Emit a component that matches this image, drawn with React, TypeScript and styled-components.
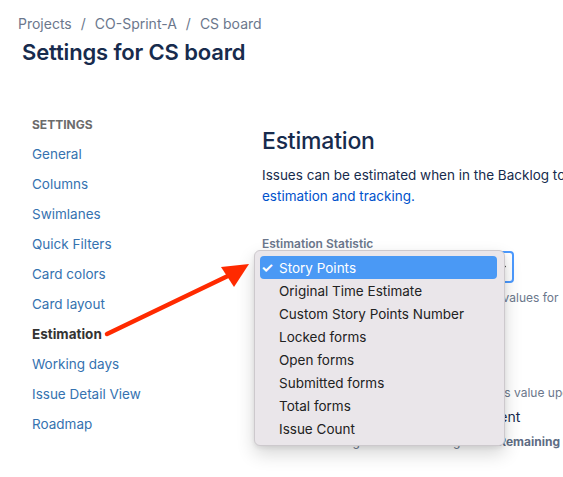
import React from 'react';
import styled, { createGlobalStyle } from 'styled-components';

const GlobalStyle = createGlobalStyle`
  html, body { margin: 0; padding: 0; background: #ffffff; overflow: hidden; }
  body { font-family: Inter, "Liberation Sans", Arial, sans-serif; -webkit-font-smoothing: antialiased; }
  * { box-sizing: border-box; }
`;

const Page = styled.div`
  position: relative;
  width: 563px;
  height: 477px;
  overflow: hidden;
`;

const Header = styled.header`
  padding-top: 14px;
`;

const Breadcrumbs = styled.nav`
  display: flex;
  align-items: center;
  margin-left: 18px;
  font-size: 14px;
  line-height: 20px;
  color: #6b778c;
`;

const Crumb = styled.span`
  white-space: nowrap;
`;

const Sep = styled.span`
  padding: 0 9px;
`;

const Title = styled.h1`
  margin: 4px 0 0 22px;
  font-size: 22px;
  line-height: 28px;
  font-weight: 600;
  color: #172b4d;
  letter-spacing: -0.15px;
`;

const Content = styled.div`
  display: flex;
  margin-top: 51px;
  width: 900px;
`;

const Sidebar = styled.aside`
  flex: none;
  width: 262px;
  padding-left: 32px;
`;

const SideHeading = styled.div`
  font-size: 12px;
  line-height: 16px;
  font-weight: 700;
  color: #6b6b6b;
  margin-bottom: 6px;
`;

const NavItem = styled.a<{ $active?: boolean }>`
  display: block;
  font-size: 13.5px;
  line-height: 30px;
  color: ${p => (p.$active ? '#333333' : '#3572b0')};
  font-weight: ${p => (p.$active ? 700 : 400)};
  text-decoration: none;
  white-space: nowrap;
`;

const Main = styled.main`
  flex: none;
  width: 620px;
  padding-top: 10px;
  color: #172b4d;
`;

const SectionTitle = styled.h2`
  margin: 0 0 10px;
  font-size: 23px;
  line-height: 28px;
  font-weight: 500;
  color: #172b4d;
  letter-spacing: -0.2px;
`;

const Para = styled.p`
  margin: 0;
  font-size: 13.5px;
  line-height: 21px;
  white-space: nowrap;
`;

const Link = styled.a`
  color: #0052cc;
  text-decoration: none;
`;

const Field = styled.div`
  margin-top: 30px;
`;

const Label = styled.label`
  display: block;
  font-size: 12px;
  line-height: 14px;
  font-weight: 600;
  color: #6b778c;
`;

const SelectBox = styled.div`
  width: 252px;
  height: 32px;
  border: 2px solid #4c9aff;
  border-radius: 4px;
  background: #ffffff;
  display: flex;
  align-items: center;
  justify-content: flex-end;
  padding-right: 4px;
`;

const Help = styled.div`
  margin-top: 7px;
  font-size: 12px;
  line-height: 16px;
  color: #6b778c;
  white-space: nowrap;
`;

const SubTitle = styled.h3`
  margin: 15px 0 12px;
  font-size: 16px;
  line-height: 20px;
  font-weight: 600;
  color: #172b4d;
`;

const Description = styled.div`
  font-size: 12px;
  line-height: 16px;
  color: #6b778c;
  white-space: nowrap;
`;

const RadioRow = styled.div`
  display: flex;
  align-items: center;
  gap: 7px;
  margin-top: 6px;
  font-size: 14px;
  line-height: 20px;
  color: #172b4d;
  white-space: nowrap;
`;

const Radio = styled.span`
  width: 14px;
  height: 14px;
  border-radius: 50%;
  border: 4px solid #0052cc;
`;

const RadioHelp = styled.div`
  margin: 7px 0 0 21px;
  font-size: 12px;
  line-height: 16px;
  color: #6b778c;
  white-space: nowrap;
  b { font-weight: 700; color: #5e6c84; }
`;

const Menu = styled.ul`
  position: absolute;
  left: 254px;
  top: 250px;
  width: 251px;
  margin: 0;
  padding: 5px 7px 5px 5px;
  list-style: none;
  background: #eae6ea;
  border: 1px solid #cdc9cd;
  border-radius: 6px;
  box-shadow: 0 8px 18px rgba(0, 0, 0, 0.16), 0 2px 4px rgba(0, 0, 0, 0.08);
`;

const MenuItem = styled.li<{ $selected?: boolean }>`
  display: flex;
  align-items: center;
  height: 23px;
  padding-left: 1px;
  border-radius: 4px;
  font-size: 13.5px;
  color: ${p => (p.$selected ? '#ffffff' : '#222222')};
  background: ${p => (p.$selected ? '#4a99f5' : 'transparent')};
  white-space: nowrap;
`;

const Check = styled.span`
  width: 18px;
  font-size: 14px;
  font-weight: 700;
`;

const Overlay = styled.svg`
  position: absolute;
  left: 0;
  top: 0;
  pointer-events: none;
`;

const navItems = [
  'General',
  'Columns',
  'Swimlanes',
  'Quick Filters',
  'Card colors',
  'Card layout',
  'Estimation',
  'Working days',
  'Issue Detail View',
  'Roadmap',
];

const options = [
  'Story Points',
  'Original Time Estimate',
  'Custom Story Points Number',
  'Locked forms',
  'Open forms',
  'Submitted forms',
  'Total forms',
  'Issue Count',
];

export default function App() {
  return (
    <Page>
      <GlobalStyle />
      <Header>
        <Breadcrumbs>
          <Crumb>Projects</Crumb>
          <Sep>/</Sep>
          <Crumb>CO-Sprint-A</Crumb>
          <Sep>/</Sep>
          <Crumb>CS board</Crumb>
        </Breadcrumbs>
        <Title>Settings for CS board</Title>
      </Header>
      <Content>
        <Sidebar>
          <SideHeading>SETTINGS</SideHeading>
          {navItems.map(n => (
            <NavItem key={n} $active={n === 'Estimation'}>
              {n}
            </NavItem>
          ))}
        </Sidebar>
        <Main>
          <SectionTitle>Estimation</SectionTitle>
          <Para>
            Issues can be estimated when in the Backlog to help with planning. Learn more about
            <br />
            <Link>estimation and tracking.</Link>
          </Para>
          <Field>
            <Label>Estimation Statistic</Label>
            <SelectBox>
              <svg width="10" height="10" viewBox="0 0 10 10">
                <path d="M2.5 4 L5 6.5 L7.5 4" fill="none" stroke="#222" strokeWidth="1.5" />
              </svg>
            </SelectBox>
            <Help>
              Used to estimate and track all issues. Add values for
              <br />
              each issue in reports.
            </Help>
          </Field>
          <SubTitle>Time Tracking</SubTitle>
          <Description>
            The Remaining Estimate is tracked.
            <br />
            When work is logged, Jira then updates this value upon logging work.
          </Description>
          <RadioRow>
            <Radio />
            Remaining Estimate and Time Spent
          </RadioRow>
          <RadioHelp>
            Track time against issues using Jira's <b>Remaining Estimate</b> and <b>Time Spent</b> fields.
          </RadioHelp>
        </Main>
      </Content>
      <Menu>
        {options.map((o, i) => (
          <MenuItem key={o} $selected={i === 0}>
            <Check>{i === 0 ? '✓' : ''}</Check>
            {o}
          </MenuItem>
        ))}
      </Menu>
      <Overlay width="563" height="477" viewBox="0 0 563 477">
        <line x1="107" y1="334" x2="232" y2="274" stroke="#ff2a00" strokeWidth="4.5" strokeLinecap="round" />
        <polygon points="249,264 221,267 234,287" fill="#ff2a00" />
      </Overlay>
    </Page>
  );
}
